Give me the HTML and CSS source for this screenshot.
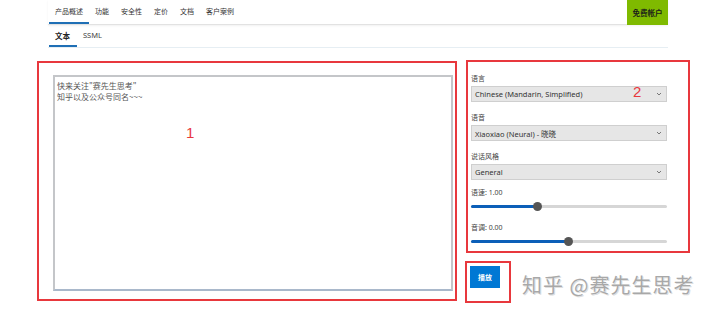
FILE: index.html
```html
<!DOCTYPE html>
<html lang="zh-CN">
<head>
    <meta charset="UTF-8">
    <title>文本转语音</title>
    <link rel="stylesheet" href="styles.css">
</head>
<body>

<div class="page">
    <nav class="topnav">
        <ul class="tabs">
            <li class="tab active">产品概述</li>
            <li class="tab">功能</li>
            <li class="tab">安全性</li>
            <li class="tab">定价</li>
            <li class="tab">文档</li>
            <li class="tab">客户案例</li>
        </ul>
        <a class="free-btn" href="#">免费帐户</a>
    </nav>

    <div class="subnav">
        <span class="subtab active">文本</span>
        <span class="subtab">SSML</span>
    </div>
</div>

<div class="main">
    <div class="mark mark-text">
        <textarea class="editor">快来关注"赛先生思考"
知乎以及公众号同名~~~</textarea>
        <span class="mark-num num-1">1</span>
    </div>

    <div class="side">
        <div class="mark mark-form">
            <div class="field">
                <label>语言</label>
                <div class="select">Chinese (Mandarin, Simplified)<svg viewBox="0 0 8 8"><path d="M2 3l2 2 2-2" /></svg></div>
            </div>
            <div class="field">
                <label>语音</label>
                <div class="select">Xiaoxiao (Neural) - 晓晓<svg viewBox="0 0 8 8"><path d="M2 3l2 2 2-2" /></svg></div>
            </div>
            <div class="field field-last-select">
                <label>说话风格</label>
                <div class="select">General<svg viewBox="0 0 8 8"><path d="M2 3l2 2 2-2" /></svg></div>
            </div>
            <div class="field">
                <label>语速: 1.00</label>
                <div class="slider"><div class="fill" style="width: 34%"></div><span class="thumb" style="left: 34%"></span></div>
            </div>
            <div class="field">
                <label>音调: 0.00</label>
                <div class="slider"><div class="fill" style="width: 50%"></div><span class="thumb" style="left: 50%"></span></div>
            </div>
            <span class="mark-num num-2">2</span>
        </div>

        <div class="bottom-row">
            <div class="mark mark-btn">
                <button class="play">播放</button>
            </div>
            <span class="watermark">知乎 @赛先生思考</span>
        </div>
    </div>
</div>

</body>
</html>
```

FILE: styles.css
```css
* {
    margin: 0;
    padding: 0;
    box-sizing: border-box;
}

body {
    font-family: "Noto Sans", "Noto Sans CJK SC", sans-serif;
    background-color: #fff;
    color: #333;
    font-size: 7px;
}

.page {
    width: 620px;
    margin-left: 48px;
}

/* 顶部导航 */
.topnav {
    display: flex;
    justify-content: space-between;
    height: 25px;
    border-bottom: 1px solid #e2e2e2;
    box-shadow: 0 1px 2px rgba(0, 0, 0, 0.06);
}

.tabs {
    display: flex;
    list-style: none;
    padding-left: 1px;
}

.tab {
    padding: 6px 6px 0;
    height: 24px;
    color: #333;
    border-bottom: 2px solid transparent;
}

.tab.active {
    border-bottom-color: #1f6fb5;
}

.free-btn {
    width: 41px;
    height: 25px;
    background-color: #7fba00;
    color: #1a1a1a;
    font-weight: bold;
    text-decoration: none;
    display: flex;
    align-items: center;
    justify-content: center;
    font-size: 7.5px;
}

.subnav {
    display: flex;
    height: 23px;
    padding-left: 1px;
    border-bottom: 1px solid #e6eef3;
}

.subtab {
    padding: 5px 6px 0;
    height: 22px;
    font-size: 7.5px;
    color: #444;
    border-bottom: 2px solid transparent;
}

.subtab.active {
    font-weight: bold;
    color: #222;
    padding-right: 7px;
    border-bottom-color: #1f6fb5;
}

/* 主体 */
.main {
    display: flex;
    gap: 9px;
    padding-left: 37px;
    margin-top: 12px;
}

.mark {
    border: 2px solid #e8383d;
    position: relative;
}

.mark-text {
    width: 420px;
    height: 240px;
    margin-top: 1px;
    padding: 12px 2px 8px 14px;
}

.editor {
    display: block;
    width: 100%;
    height: 100%;
    resize: none;
    border: 2px solid #c4c6c9;
    border-bottom-color: #a9b8cb;
    padding: 3px 2px;
    font-family: "Noto Sans CJK SC", sans-serif;
    font-size: 8px;
    line-height: 11px;
    color: #555;
    outline: none;
}

.mark-num {
    position: absolute;
    color: #e8383d;
    font-size: 15px;
    font-family: "Liberation Sans", sans-serif;
}

.num-1 {
    left: 147px;
    top: 61px;
}

.num-2 {
    left: 165px;
    top: 21px;
}

.side {
    display: flex;
    flex-direction: column;
    gap: 8px;
}

.mark-form {
    width: 224px;
    height: 193px;
    padding: 11px 21px 0 3px;
}

.field {
    margin-bottom: 10px;
}

.field-last-select {
    margin-bottom: 7px;
}

.field label {
    display: block;
    height: 11px;
    line-height: 11px;
    margin-bottom: 2px;
    color: #444;
}

.select {
    display: flex;
    align-items: center;
    justify-content: space-between;
    height: 16px;
    padding: 0 3px;
    background-color: #e6e6e6;
    border: 1px solid #cfcfcf;
    font-size: 7.5px;
    color: #333;
}

.select svg {
    width: 8px;
    height: 8px;
    fill: none;
    stroke: #777;
    stroke-width: 1;
}

.slider {
    position: relative;
    height: 3px;
    margin: 7px 0 14px;
    background-color: #d6d6d6;
    border-radius: 2px;
}

.fill {
    height: 3px;
    background-color: #0c5fb8;
    border-radius: 2px;
}

.thumb {
    position: absolute;
    top: -3px;
    width: 9px;
    height: 9px;
    margin-left: -5px;
    border-radius: 50%;
    background-color: #555;
}

.bottom-row {
    display: flex;
    align-items: center;
    gap: 11px;
}

.mark-btn {
    width: 46px;
    height: 42px;
    margin-left: -1px;
    padding: 3px 0 0 3px;
}

.play {
    width: 30px;
    height: 22px;
    background-color: #0078d4;
    color: #fff;
    border: none;
    font-size: 7px;
    font-weight: bold;
    font-family: "Noto Sans CJK SC", sans-serif;
}

.watermark {
    font-family: "Noto Sans CJK SC", sans-serif;
    font-size: 20px;
    color: #a8a8a8;
    letter-spacing: 1px;
    text-shadow: 0 0 1px #fff, 1px 1px 0 #ddd;
    margin-top: 5px;
}
```
